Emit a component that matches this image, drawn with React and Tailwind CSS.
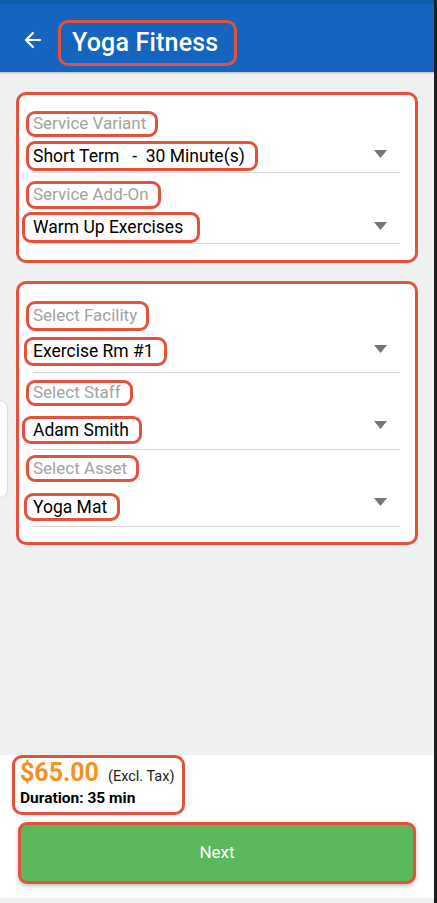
import { ArrowLeft } from "lucide-react";

const serviceFields = [
  {
    label: "Service Variant",
    value: "Short Term   -  30 Minute(s)",
    labelClass: "mt-0 h-[26px]",
    valueClass: "mt-[4px] h-[30px]",
    lineClass: "mt-[1px]",
  },
  {
    label: "Service Add-On",
    value: "Warm Up Exercises",
    labelClass: "mt-[8px] h-[28px]",
    valueClass: "mt-[3px] h-[31px] -ml-[4px] pl-[8px] pr-[14px]",
    lineClass: "mt-0",
  },
];

const resourceFields = [
  {
    label: "Select Facility",
    value: "Exercise Rm #1",
    labelClass: "mt-0 h-[30px]",
    valueClass: "mt-[6px] h-[29px] -ml-[2px] pl-[6px]",
    lineClass: "mt-[6px]",
  },
  {
    label: "Select Staff",
    value: "Adam Smith",
    labelClass: "mt-[7px] h-[26px]",
    valueClass: "mt-[10px] h-[28px] -ml-[4px] pl-[8px]",
    lineClass: "mt-[5px]",
  },
  {
    label: "Select Asset",
    value: "Yoga Mat",
    labelClass: "mt-[5px] h-[27px]",
    valueClass: "mt-[11px] h-[28px] -ml-[2px] pl-[6px]",
    lineClass: "mt-[5px]",
  },
];

function Caret() {
  return (
    <svg width="13" height="8" viewBox="0 0 13 8" className="mr-[28px]">
      <path d="M0 0 H13 L6.5 8 Z" fill="#757575" />
    </svg>
  );
}

function Field({ field }) {
  return (
    <div>
      <div
        className={`${field.labelClass} inline-flex items-center rounded-[9px] border-[3px] border-[#e4523b] pl-[4px] pr-[9px] text-[17px] text-[#a3a3a3]`}
      >
        {field.label}
      </div>
      <div className="flex items-center justify-between">
        <div
          className={`${field.valueClass} inline-flex items-center whitespace-pre rounded-[9px] border-[3px] border-[#e4523b] pl-[4px] pr-[10px] text-[17.5px] text-black`}
        >
          {field.value}
        </div>
        <Caret />
      </div>
      <div className={`${field.lineClass} ml-[7px] mr-[15px] h-px bg-[#d6d8de]`} />
    </div>
  );
}

function Card({ fields, className }) {
  return (
    <section
      className={`${className} rounded-[10px] border-[3px] border-[#e4523b] bg-white pl-[7px]`}
    >
      {fields.map((field) => (
        <Field field={field} key={field.label} />
      ))}
    </section>
  );
}

export default function App() {
  return (
    <div
      className="flex h-[903px] w-[437px] overflow-hidden"
      style={{ fontFamily: "Roboto, 'Liberation Sans', sans-serif" }}
    >
      <div className="flex w-[434px] flex-col">
        <div className="h-[4px] bg-[#0c61a6]" />
        <header className="relative z-10 flex h-[68px] items-start bg-[#1565c0] shadow-[0_1px_2px_rgba(0,0,0,0.25)]">
          <ArrowLeft className="ml-[21px] mt-[24px] text-white" size={24} strokeWidth={2.2} />
          <div className="ml-[13px] mt-[16px] flex h-[46px] items-center rounded-[10px] border-[3px] border-[#e4523b] pl-[11px] pr-[16px] text-[25px] font-medium tracking-[0.2px] text-white">
            Yoga Fitness
          </div>
        </header>

        <main className="relative flex-1 bg-[#eff1f0] px-[16px] pt-[20px]">
          <div className="absolute left-0 top-[328px] h-[98px] w-[8px] rounded-r-[8px] border border-l-0 border-[#dcdedd] bg-white" />
          <Card fields={serviceFields} className="pt-[16px] pb-[16px]" />
          <Card fields={resourceFields} className="mt-[18px] pt-[17px] pb-[15px]" />
        </main>

        <footer className="h-[143px] bg-white">
          <div className="ml-[12px] inline-flex h-[60px] flex-col rounded-[10px] border-[3px] border-[#e4523b] pl-[5px] pr-[8px]">
            <div className="flex items-baseline">
              <span className="text-[25px] font-bold leading-[30px] text-[#f7901e]">$65.00</span>
              <span className="ml-[9px] text-[14.5px] text-[#222]">(Excl. Tax)</span>
            </div>
            <p className="text-[15.5px] font-bold leading-[20px] text-black">Duration: 35 min</p>
          </div>
          <button
            className="mx-[18px] mt-[7px] flex h-[62px] w-[398px] items-center justify-center rounded-[9px] border-[3px] border-[#e4523b] bg-[#5cb85c] text-[17px] text-white shadow-[0_2px_4px_rgba(0,0,0,0.25)]"
            type="button"
          >
            Next
          </button>
        </footer>
        <div className="h-[5px] bg-[#eef0ef]" />
      </div>
      <div className="w-[3px] bg-[#1f1f1f]" />
    </div>
  );
}
